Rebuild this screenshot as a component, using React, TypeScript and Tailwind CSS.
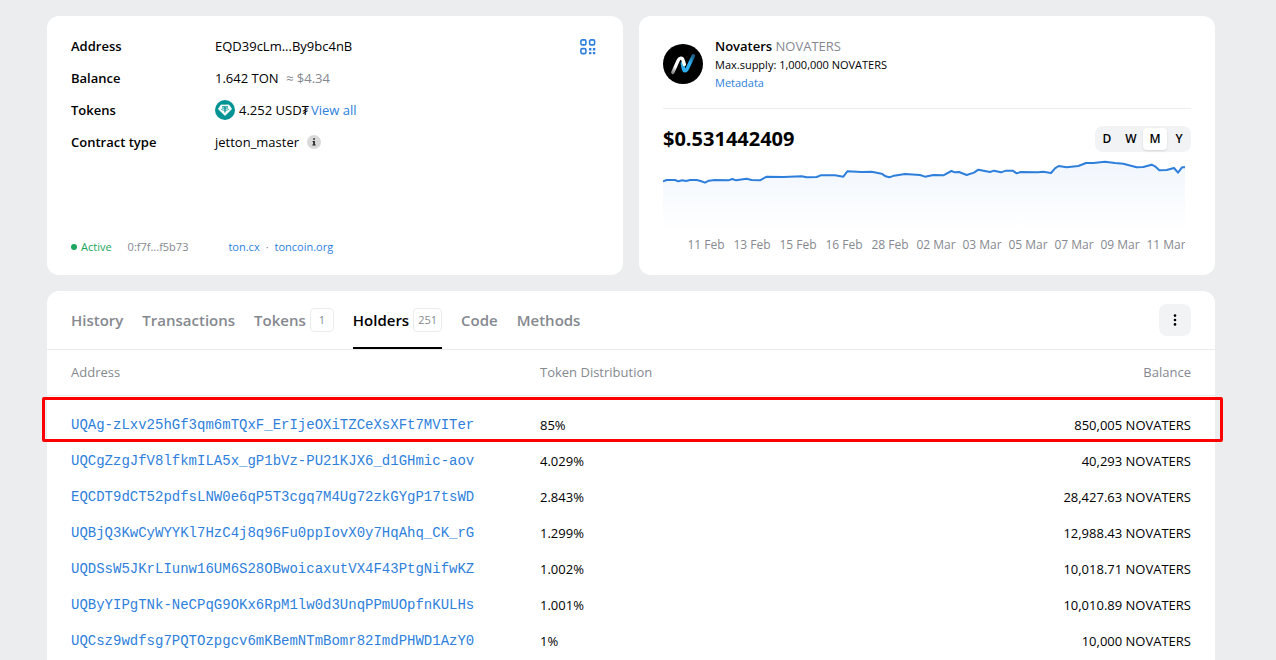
import React from 'react';

const holders = [
  { address: 'UQAg-zLxv25hGf3qm6mTQxF_ErIjeOXiTZCeXsXFt7MVITer', share: '85%', balance: '850,005 NOVATERS' },
  { address: 'UQCgZzgJfV8lfkmILA5x_gP1bVz-PU21KJX6_d1GHmic-aov', share: '4.029%', balance: '40,293 NOVATERS' },
  { address: 'EQCDT9dCT52pdfsLNW0e6qP5T3cgq7M4Ug72zkGYgP17tsWD', share: '2.843%', balance: '28,427.63 NOVATERS' },
  { address: 'UQBjQ3KwCyWYYKl7HzC4j8q96Fu0ppIovX0y7HqAhq_CK_rG', share: '1.299%', balance: '12,988.43 NOVATERS' },
  { address: 'UQDSsW5JKrLIunw16UM6S28OBwoicaxutVX4F43PtgNifwKZ', share: '1.002%', balance: '10,018.71 NOVATERS' },
  { address: 'UQByYIPgTNk-NeCPqG9OKx6RpM1lw0d3UnqPPmUOpfnKULHs', share: '1.001%', balance: '10,010.89 NOVATERS' },
  { address: 'UQCsz9wdfsg7PQTOzpgcv6mKBemNTmBomr82ImdPHWD1AzY0', share: '1%', balance: '10,000 NOVATERS' },
];

const tabs: { label: string; count?: number }[] = [
  { label: 'History' },
  { label: 'Transactions' },
  { label: 'Tokens', count: 1 },
  { label: 'Holders', count: 251 },
  { label: 'Code' },
  { label: 'Methods' },
];

const periods = ['D', 'W', 'M', 'Y'];

const dates = [
  '11 Feb', '13 Feb', '15 Feb', '16 Feb', '28 Feb', '02 Mar',
  '03 Mar', '05 Mar', '07 Mar', '09 Mar', '11 Mar',
];

const pricePoints =
  '0,70 11,66 36,66 46,70 58,67 69,69 81,66 101,66 113,69 126,74 138,68 156,66 196,67 208,63 219,67 251,62 266,66 291,67 311,56 361,57 416,55 431,58 461,57 473,52 516,52 541,56 553,40 596,42 626,41 656,47 668,55 679,58 693,53 726,48 771,51 786,56 811,51 841,52 865,39 876,43 888,42 911,51 933,44 946,35 981,42 993,38 1014,43 1029,38 1049,38 1061,46 1073,42 1126,43 1141,41 1164,45 1176,31 1187,24 1211,28 1246,24 1269,15 1291,15 1326,11 1356,15 1381,17 1421,28 1441,27 1466,20 1476,25 1489,37 1511,36 1533,30 1545,44 1557,28 1566,28';

const QrIcon = () => (
  <svg className="h-4 w-4" viewBox="0 0 16 16" fill="none" stroke="#2e7fdc" strokeWidth="1.6">
    <rect x="0.9" y="0.9" width="5" height="5" rx="1.4" />
    <rect x="9.6" y="0.9" width="5" height="5" rx="1.4" />
    <rect x="0.9" y="9.6" width="5" height="5" rx="1.4" />
    <g fill="#2e7fdc" stroke="none">
      <rect x="9" y="9" width="2.4" height="2.4" rx="0.5" />
      <rect x="12.9" y="9" width="2.4" height="2.4" rx="0.5" />
      <rect x="9" y="12.9" width="2.4" height="2.4" rx="0.5" />
      <rect x="12.9" y="12.9" width="2.4" height="2.4" rx="0.5" />
    </g>
  </svg>
);

const TetherIcon = () => (
  <svg className="h-5 w-5" viewBox="0 0 20 20">
    <circle cx="10" cy="10" r="10" fill="#009393" />
    <path d="M6 4.9h8l2.7 4.1L10 15.6 3.3 9z" fill="#fff" stroke="#fff" strokeWidth="0.6" strokeLinejoin="round" />
    <path d="M7 6.9h6M10 6.9v5.6" stroke="#009393" strokeWidth="1.3" />
    <ellipse cx="10" cy="9.4" rx="3.6" ry="0.9" fill="none" stroke="#009393" strokeWidth="0.7" />
  </svg>
);

const NovatersLogo = () => (
  <svg className="h-10 w-10 shrink-0" viewBox="0 0 40 40">
    <defs>
      <linearGradient id="nova-white" x1="0" y1="1" x2="0.5" y2="0">
        <stop offset="0" stopColor="#8b8b8b" />
        <stop offset="0.4" stopColor="#ffffff" />
      </linearGradient>
      <linearGradient id="nova-blue" x1="0" y1="1" x2="1" y2="0">
        <stop offset="0.6" stopColor="#2eaef0" />
        <stop offset="1" stopColor="#1d5c80" />
      </linearGradient>
    </defs>
    <circle cx="20" cy="20" r="20" fill="#000" />
    <path
      d="M19.4 19.6l1.1 5.2c.5 2.4 2.1 2.6 3.5.4L30.4 11.8"
      fill="none"
      stroke="url(#nova-blue)"
      strokeWidth="3.6"
      strokeLinecap="round"
      strokeLinejoin="round"
    />
    <path
      d="M9.8 28.4l5.4-12c1.3-2.8 4-3.2 4.8-.4l1.4 4.4"
      fill="none"
      stroke="url(#nova-white)"
      strokeWidth="3.4"
      strokeLinecap="round"
      strokeLinejoin="round"
    />
  </svg>
);

const AccountCard: React.FC = () => (
  <section className="flex flex-col rounded-xl bg-white px-6 pt-[14px] pb-[18px]">
    <div className="flex items-start justify-between">
      <dl className="grid grid-cols-[144px_auto] auto-rows-[32px] items-center">
        <dt className="font-semibold">Address</dt>
        <dd>EQD39cLm...By9bc4nB</dd>
        <dt className="font-semibold">Balance</dt>
        <dd>
          1.642 TON <span className="ml-1 text-[#85898f]">≈ $4.34</span>
        </dd>
        <dt className="font-semibold">Tokens</dt>
        <dd className="flex items-center gap-1">
          <TetherIcon />
          <span>
            4.252 USD₮<a href="#tokens" className="ml-0.5 text-[#2e7fdc]">View all</a>
          </span>
        </dd>
        <dt className="font-semibold">Contract type</dt>
        <dd className="flex items-center gap-2">
          jetton_master
          <svg className="h-[14px] w-[14px]" viewBox="0 0 14 14">
            <circle cx="7" cy="7" r="7" fill="#d9d9d9" />
            <path d="M6.2 3.2h1.7v1.6H6.2zM5.6 6h2.3v3.6h.8v1H5.4v-1h.8V7h-.6z" fill="#222" />
          </svg>
        </dd>
      </dl>
      <button type="button" aria-label="Show QR code" className="mt-[9px] mr-[3px]">
        <QrIcon />
      </button>
    </div>

    <div className="mt-auto flex items-center text-[11px] leading-5">
      <span className="mr-1 h-1.5 w-1.5 rounded-full bg-[#19a65f]"></span>
      <span className="text-[#19a65f]">Active</span>
      <span className="ml-4 text-[#85898f]">0:f7f...f5b73</span>
      <div className="ml-10 flex gap-1.5 text-[#85898f]">
        <a href="#ton-cx" className="text-[#2e7fdc]">ton.cx</a>
        <span>·</span>
        <a href="#toncoin" className="text-[#2e7fdc]">toncoin.org</a>
      </div>
    </div>
  </section>
);

const PriceCard: React.FC = () => {
  const [period, setPeriod] = React.useState('M');

  return (
    <section className="rounded-xl bg-white px-6 py-5">
      <div className="flex items-center gap-3 border-b border-[#ebecee] pb-4">
        <NovatersLogo />
        <div>
          <h1 className="leading-5">
            <span className="font-semibold">Novaters</span> <span className="text-[#85898f]">NOVATERS</span>
          </h1>
          <p className="text-[11px] leading-[18px]">Max.supply: 1,000,000 NOVATERS</p>
          <a href="#metadata" className="block text-[11px] leading-[18px] text-[#2e7fdc]">Metadata</a>
        </div>
      </div>

      <div className="mt-[17px] flex items-center justify-between">
        <div className="text-xl leading-[26px] font-bold">$0.531442409</div>
        <div className="flex rounded-lg bg-[#f1f3f5] py-0.5">
          {periods.map((item) => (
            <button
              key={item}
              type="button"
              onClick={() => setPeriod(item)}
              className={`h-[22px] w-6 rounded text-xs font-semibold ${
                period === item ? 'bg-white shadow-sm' : ''
              }`}
            >
              {item}
            </button>
          ))}
        </div>
      </div>

      <div className="mt-1.5 mr-1.5 overflow-hidden">
        <svg className="h-[72px] w-full" viewBox="0 0 1566 216" preserveAspectRatio="none">
          <defs>
            <linearGradient id="price-fill" gradientUnits="userSpaceOnUse" x1="0" y1="10" x2="0" y2="216">
              <stop offset="0" stopColor="#2e7fdc" stopOpacity="0.07" />
              <stop offset="1" stopColor="#2e7fdc" stopOpacity="0" />
            </linearGradient>
          </defs>
          <polygon points={`${pricePoints} 1566,216 0,216`} fill="url(#price-fill)" />
          <polyline
            points={pricePoints}
            fill="none"
            stroke="#2e7fdc"
            strokeWidth="2"
            strokeLinejoin="round"
            vectorEffect="non-scaling-stroke"
          />
        </svg>
        <div className="mt-[5px] -mr-1 ml-5 grid grid-cols-11 text-center text-xs leading-5 whitespace-nowrap text-[#85898f]">
          {dates.map((date) => (
            <span key={date}>{date}</span>
          ))}
        </div>
      </div>
    </section>
  );
};

const HoldersCard: React.FC = () => {
  const [activeTab, setActiveTab] = React.useState('Holders');

  return (
    <section className="rounded-t-xl bg-white pb-6">
      <div className="flex items-center justify-between border-b border-[#ebecee] px-6">
        <nav className="flex gap-[19px]">
          {tabs.map((tab) => (
            <button
              key={tab.label}
              type="button"
              onClick={() => setActiveTab(tab.label)}
              className={`flex h-[58px] items-center gap-1 border-b-2 pt-0.5 text-[15px] font-semibold ${
                activeTab === tab.label ? 'border-black text-black' : 'border-transparent text-[#85898f]'
              }`}
            >
              {tab.label}
              {tab.count && (
                <span className="flex h-6 min-w-6 items-center justify-center rounded border border-[#ebecee] px-1 text-[11px] font-normal text-[#85898f]">
                  {tab.count}
                </span>
              )}
            </button>
          ))}
        </nav>
        <button
          type="button"
          aria-label="More actions"
          className="flex h-8 w-8 items-center justify-center rounded-lg bg-[#f1f3f5]"
        >
          <svg className="h-3 w-3" viewBox="0 0 12 12">
            <circle cx="6" cy="1.6" r="1.3" />
            <circle cx="6" cy="6" r="1.3" />
            <circle cx="6" cy="10.4" r="1.3" />
          </svg>
        </button>
      </div>

      <div className="relative">
        <table className="w-full table-fixed">
          <thead>
            <tr className="h-[45px] border-b border-[#ebecee] text-[#85898f]">
              <th className="w-[493px] pl-6 text-left font-normal">Address</th>
              <th className="text-left font-normal">Token Distribution</th>
              <th className="pr-6 text-right font-normal">Balance</th>
            </tr>
          </thead>
          <tbody className="before:block before:h-[11px]">
            {holders.map((holder) => (
              <tr key={holder.address} className="h-9">
                <td className="pl-6">
                  <a
                    href={`#${holder.address}`}
                    className="block font-['Liberation_Mono',monospace] text-sm leading-5 text-[#2e7fdc]"
                  >
                    {holder.address}
                  </a>
                </td>
                <td>{holder.share}</td>
                <td className="pr-6 text-right">{holder.balance}</td>
              </tr>
            ))}
          </tbody>
        </table>
        {/* Marker around the top holder */}
        <div className="pointer-events-none absolute top-[47px] -right-2 -left-[5px] h-[45px] rounded-xs border-3 border-[#ff0000]"></div>
      </div>
    </section>
  );
};

const App: React.FC = () => (
  <main className="min-h-screen bg-[#ecedef] pt-4 pr-[61px] pl-[47px] font-['Open_Sans','Noto_Sans',sans-serif] text-[13px] leading-5 text-black">
    <div className="grid grid-cols-2 gap-4 pb-4">
      <AccountCard />
      <PriceCard />
    </div>
    <HoldersCard />
  </main>
);

export default App;
